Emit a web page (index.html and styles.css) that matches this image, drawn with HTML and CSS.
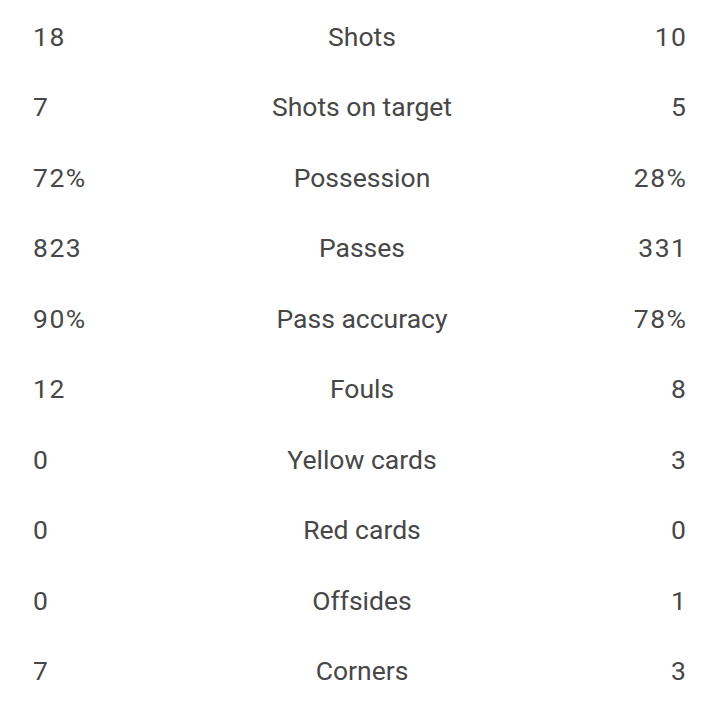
FILE: index.html
```
<!DOCTYPE html>
<html>
<head>
<meta charset="utf-8">
<link rel="stylesheet" href="styles.css">
</head>
<body>
<div class="stats">
  <div class="row"><span class="home">18</span><span class="label">Shots</span><span class="away">10</span></div>
  <div class="row"><span class="home">7</span><span class="label">Shots on target</span><span class="away">5</span></div>
  <div class="row"><span class="home">72%</span><span class="label">Possession</span><span class="away">28%</span></div>
  <div class="row"><span class="home">823</span><span class="label">Passes</span><span class="away">331</span></div>
  <div class="row"><span class="home">90%</span><span class="label">Pass accuracy</span><span class="away">78%</span></div>
  <div class="row"><span class="home">12</span><span class="label">Fouls</span><span class="away">8</span></div>
  <div class="row"><span class="home">0</span><span class="label">Yellow cards</span><span class="away">3</span></div>
  <div class="row"><span class="home">0</span><span class="label">Red cards</span><span class="away">0</span></div>
  <div class="row"><span class="home">0</span><span class="label">Offsides</span><span class="away">1</span></div>
  <div class="row"><span class="home">7</span><span class="label">Corners</span><span class="away">3</span></div>
</div>
</body>
</html>
```
FILE: styles.css
```
html, body {
  margin: 0;
  padding: 0;
  background: #ffffff;
}
body {
  font-family: Roboto, "Noto Sans", sans-serif;
  color: #474747;
}
.stats {
  padding: 1px 33px 0 33px;
}
.row {
  display: grid;
  grid-template-columns: 1fr auto 1fr;
  align-items: center;
  height: 70.5px;
  font-size: 26.5px;
}
.home {
  text-align: left;
  letter-spacing: 1.5px;
}
.label {
  text-align: center;
  padding-left: 5px;
}
.away {
  text-align: right;
  letter-spacing: 1.5px;
  margin-right: -1.5px;
}
```
